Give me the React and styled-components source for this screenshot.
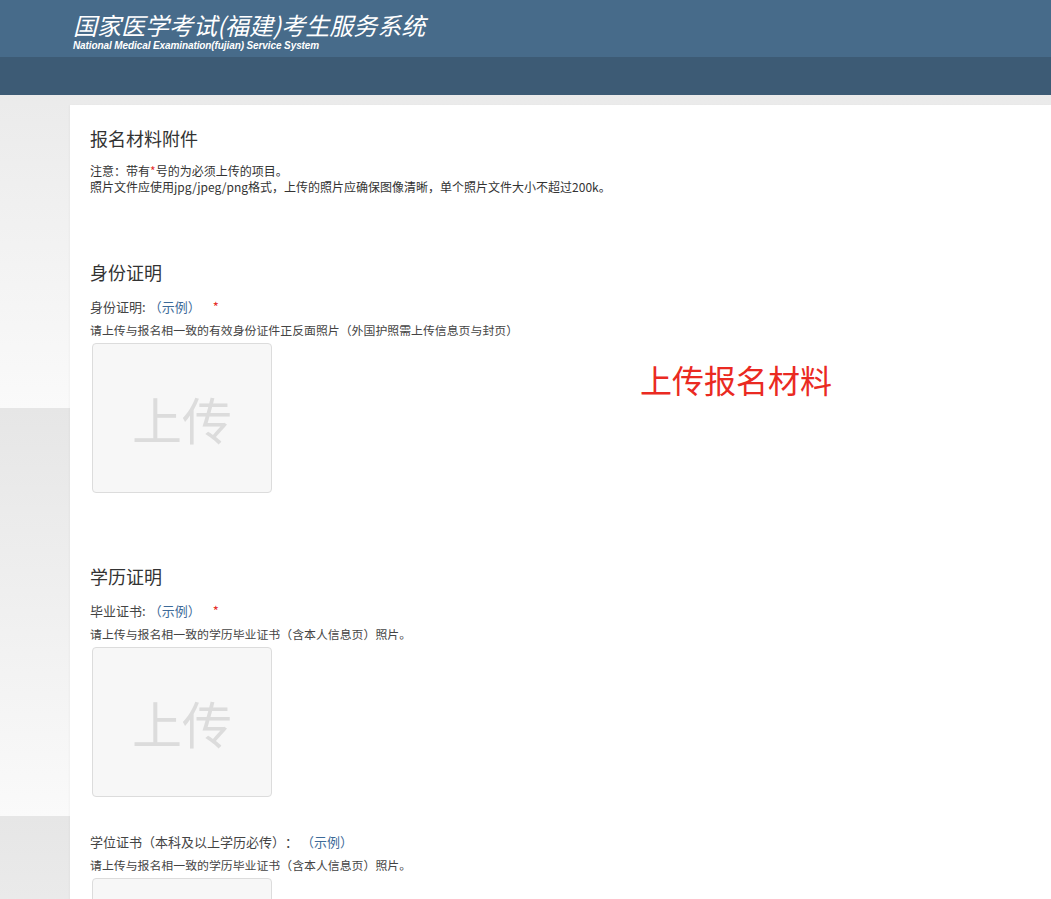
import React from 'react';
import styled, { createGlobalStyle } from 'styled-components';

const GlobalStyle = createGlobalStyle`
  html, body {
    margin: 0;
    padding: 0;
  }

  body {
    font-family: "Noto Sans CJK SC", "Liberation Sans", sans-serif;
    color: #333;
    text-spacing-trim: space-all;
    background: repeating-linear-gradient(to bottom, #e6e6e6 0, #fafafa 408px);
    overflow: hidden;
  }
`

const Header = styled.header`
  .header__top {
    height: 57px;
    background: #476b8a;
    padding: 12px 0 0 73px;
    box-sizing: border-box;
    color: #fff;
  }

  .header__title {
    font-size: 24px;
    line-height: 26px;
    font-style: italic;
    white-space: nowrap;
  }

  .header__sub {
    margin-top: 2px;
    font-family: "Liberation Sans", sans-serif;
    font-size: 10px;
    line-height: 11px;
    font-weight: bold;
    font-style: italic;
    letter-spacing: -0.1px;
    white-space: nowrap;
  }

  .header__nav {
    height: 38px;
    background: #3d5b75;
  }
`

const Page = styled.div`
  padding: 10px 0 0 70px;
`

const Card = styled.main`
  position: relative;
  display: flex;
  flex-direction: column;
  background: #fff;
  min-height: 900px;
  padding: 18px 20px 40px;
  box-shadow: -1px 0 2px rgba(0, 0, 0, .03);
`

const PageTitle = styled.h1`
  margin: 0;
  font-size: 18px;
  line-height: 30px;
  font-weight: normal;
  color: #333;
`

const Notes = styled.div`
  margin: 10px 0 0;
  font-size: 12px;
  line-height: 16px;
  color: #333;

  p {
    margin: 0;
  }
`

const Star = styled.span`
  color: #e5302a;
`

const Section = styled.section`
  display: flex;
  flex-direction: column;
  margin-top: ${p => p.first ? '62px' : '34px'};
`

const SectionTitle = styled.h2`
  margin: 0 0 9px;
  font-size: 18px;
  line-height: 30px;
  font-weight: normal;
  color: #333;
`

const Item = styled.div`
  margin-bottom: 34px;
`

const Label = styled.div`
  font-size: 13px;
  line-height: 22px;
  color: #444;
  white-space: pre;

  a {
    color: #3d6a98;
    text-decoration: none;
    margin-left: 3px;
  }

  ${Star} {
    margin-left: 12px;
  }
`

const Hint = styled.div`
  margin-top: 2px;
  font-size: 11.9px;
  line-height: 20px;
  color: #444;
  white-space: nowrap;
`

const UploadBox = styled.div`
  margin: 3px 0 0 2px;
  width: 180px;
  height: 150px;
  box-sizing: border-box;
  border: 1px solid #dcdcdc;
  border-radius: 4px;
  background: #f7f7f7;
  display: flex;
  align-items: center;
  justify-content: center;
  font-size: 50px;
  color: #dcdcdc;
  cursor: pointer;
`

const Annotation = styled.div`
  position: absolute;
  left: 570px;
  top: 254px;
  font-size: 32px;
  line-height: 40px;
  color: #ea2a22;
  white-space: nowrap;
`

const Field = ({ label, required, hint }) => (
  <Item>
    <Label>
      {label}<a href="#">（示例）</a>{required && <Star>*</Star>}
    </Label>
    <Hint>{hint}</Hint>
    <UploadBox>上传</UploadBox>
  </Item>
)

export default () => {
  return (
    <>
      <GlobalStyle />
      <Header>
        <div className="header__top">
          <div className="header__title">国家医学考试(福建)考生服务系统</div>
          <div className="header__sub">National Medical Examination(fujian) Service System</div>
        </div>
        <div className="header__nav" />
      </Header>
      <Page>
        <Card>
          <PageTitle>报名材料附件</PageTitle>
          <Notes>
            <p>注意：带有<Star>*</Star>号的为必须上传的项目。</p>
            <p>照片文件应使用jpg/jpeg/png格式，上传的照片应确保图像清晰，单个照片文件大小不超过200k。</p>
          </Notes>

          <Section first>
            <SectionTitle>身份证明</SectionTitle>
            <Field
              label="身份证明:"
              required
              hint="请上传与报名相一致的有效身份证件正反面照片（外国护照需上传信息页与封页）"
            />
          </Section>

          <Section>
            <SectionTitle>学历证明</SectionTitle>
            <Field
              label="毕业证书:"
              required
              hint="请上传与报名相一致的学历毕业证书（含本人信息页）照片。"
            />
            <Field
              label="学位证书（本科及以上学历必传）："
              hint="请上传与报名相一致的学历毕业证书（含本人信息页）照片。"
            />
          </Section>

          <Annotation>上传报名材料</Annotation>
        </Card>
      </Page>
    </>
  );
}
